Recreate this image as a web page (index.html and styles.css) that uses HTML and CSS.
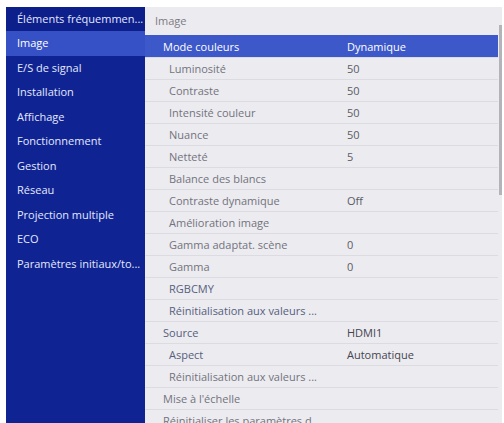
FILE: index.html
```html
<!doctype html>
<html lang="fr">
<head>
<meta charset="utf-8">
<meta name="viewport" content="width=device-width, initial-scale=1">
<title>Image</title>
<link rel="stylesheet" href="styles.css">
</head>
<body>

	<main id="divMenu">

		<nav id="divTop">
			<div class="top-head">Éléments fréquemmen...</div>
			<div class="top-item sel">Image</div>
			<div class="top-item">E/S de signal</div>
			<div class="top-item">Installation</div>
			<div class="top-item">Affichage</div>
			<div class="top-item">Fonctionnement</div>
			<div class="top-item">Gestion</div>
			<div class="top-item">Réseau</div>
			<div class="top-item">Projection multiple</div>
			<div class="top-item">ECO</div>
			<div class="top-item">Paramètres initiaux/to...</div>
		</nav>

		<section id="divSub">

			<div id="divRows">
				<div class="sub-head">Image</div>
				<div class="row sel"><span class="lbl">Mode couleurs</span><span class="val">Dynamique</span></div>
				<div class="row in"><span class="lbl">Luminosité</span><span class="val">50</span></div>
				<div class="row in"><span class="lbl">Contraste</span><span class="val">50</span></div>
				<div class="row in"><span class="lbl">Intensité couleur</span><span class="val">50</span></div>
				<div class="row in"><span class="lbl">Nuance</span><span class="val">50</span></div>
				<div class="row in"><span class="lbl">Netteté</span><span class="val">5</span></div>
				<div class="row in"><span class="lbl">Balance des blancs</span><span class="val"></span></div>
				<div class="row in"><span class="lbl">Contraste dynamique</span><span class="val">Off</span></div>
				<div class="row in"><span class="lbl">Amélioration image</span><span class="val"></span></div>
				<div class="row in"><span class="lbl">Gamma adaptat. scène</span><span class="val">0</span></div>
				<div class="row in"><span class="lbl">Gamma</span><span class="val">0</span></div>
				<div class="row in dark"><span class="lbl">RGBCMY</span><span class="val"></span></div>
				<div class="row in dark"><span class="lbl">Réinitialisation aux valeurs ...</span><span class="val"></span></div>
				<div class="row dark"><span class="lbl">Source</span><span class="val">HDMI1</span></div>
				<div class="row in dark"><span class="lbl">Aspect</span><span class="val">Automatique</span></div>
				<div class="row in"><span class="lbl">Réinitialisation aux valeurs ...</span><span class="val"></span></div>
				<div class="row"><span class="lbl">Mise à l'échelle</span><span class="val"></span></div>
				<div class="row"><span class="lbl">Réinitialiser les paramètres d...</span><span class="val"></span></div>
			</div>

			<div id="divScroll"><div class="thumb"></div></div>

		</section>

	</main>

</body>
</html>
```

FILE: styles.css
```css
* { box-sizing: border-box; }

html { height: 100%; }

body { font: 11px "Open Sans", "Noto Sans", sans-serif; margin: 0; padding: 7px 2px 0 6px;
	height: 100%; overflow: hidden; background: #fff; }

#divMenu { display: grid; grid-template-columns: 139px 1fr; height: 100%; }

/* left column */

#divTop { background: #0f2492; color: #e4e8ff; }

.top-head { height: 24px; line-height: 24px; padding-left: 11px; background: #0d1f8a; }

.top-item { height: 24.5px; line-height: 24.5px; padding-left: 11px; white-space: nowrap; }

.top-item.sel { background: #3651c6; color: #fff; }

/* right column */

#divSub { display: flex; background: #ecebef; overflow: hidden; }

#divRows { flex: 1; }

.sub-head { height: 28px; line-height: 28px; padding-left: 10px; color: #7b7b84; }

.row { display: grid; grid-template-columns: 202px 1fr; height: 22px; line-height: 21px;
	border-top: 1px solid #dcdbe1; color: #72737e; white-space: nowrap; }

.row .lbl { padding-left: 18px; }
.row.in .lbl { padding-left: 24px; }

.row .val { color: #5a5b66; }

.row.dark .lbl { color: #55607e; }
.row.dark .val { color: #44454f; }

.row.sel { background: #3d58c9; border-top-color: #3d58c9; }
.row.sel .lbl, .row.sel .val { color: #fff; }

#divScroll { width: 3px; margin-left: 1px; }

.thumb { margin-top: 18px; height: 170px; background: #b3b3ba; }
```
